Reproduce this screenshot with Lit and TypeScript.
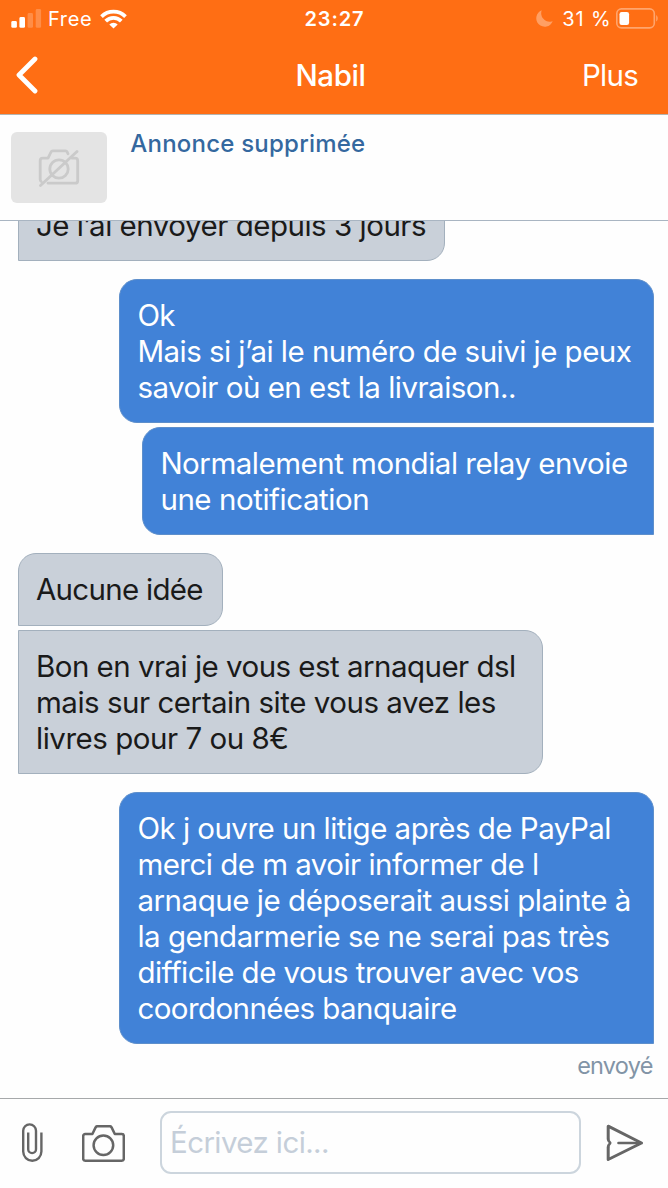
import { LitElement, html, css } from "lit";
import { customElement, property } from "lit/decorators.js";
import { classMap } from "lit/directives/class-map.js";

interface Line {
  text: string;
  tracking: number;
}

interface Message {
  mine: boolean;
  width: number;
  joinsPrevious?: boolean;
  lines: Line[];
}

const messages: Message[] = [
  { mine: false, width: 427, lines: [{ text: "Je l’ai envoyer depuis 3 jours", tracking: -0.486 }] },
  {
    mine: true,
    width: 534.5,
    lines: [
      { text: "Ok", tracking: -0.6 },
      { text: "Mais si j’ai le numéro de suivi je peux", tracking: -0.535 },
      { text: "savoir où en est la livraison..", tracking: -0.513 },
    ],
  },
  {
    mine: true,
    width: 511.5,
    joinsPrevious: true,
    lines: [
      { text: "Normalement mondial relay envoie", tracking: -0.494 },
      { text: "une notification", tracking: -0.45 },
    ],
  },
  { mine: false, width: 205, lines: [{ text: "Aucune idée", tracking: -0.72 }] },
  {
    mine: false,
    width: 525.5,
    joinsPrevious: true,
    lines: [
      { text: "Bon en vrai je vous est arnaquer dsl", tracking: -0.53 },
      { text: "mais sur certain site vous avez les", tracking: -0.48 },
      { text: "livres pour 7 ou 8€", tracking: -0.47 },
    ],
  },
  {
    mine: true,
    width: 534.5,
    lines: [
      { text: "Ok j ouvre un litige après de PayPal", tracking: -0.52 },
      { text: "merci de m avoir informer de l", tracking: -0.53 },
      { text: "arnaque je déposerait aussi plainte à", tracking: -0.465 },
      { text: "la gendarmerie se ne serai pas très", tracking: -0.505 },
      { text: "difficile de vous trouver avec vos", tracking: -0.545 },
      { text: "coordonnées banquaire", tracking: -0.565 },
    ],
  },
];

@customElement("status-bar")
class StatusBar extends LitElement {
  static styles = css`
    :host {
      display: grid;
      grid-template-columns: 1fr auto 1fr;
      align-items: center;
      height: 37px;
      padding: 0 10px 0 11px;
      font-size: 20px;
      line-height: 24px;
    }
    .side {
      display: flex;
      align-items: center;
    }
    .end {
      justify-content: flex-end;
    }
    .carrier {
      margin-left: 6px;
      letter-spacing: 0.64px;
    }
    .wifi {
      margin-left: 7.2px;
    }
    .time {
      font-weight: 600;
      letter-spacing: 0.9px;
    }
    .level {
      margin: 0 4.5px 0 9.5px;
      letter-spacing: 0.9px;
    }
    svg {
      display: block;
    }
  `;
  render() {
    return html`
      <div class="side">
        <svg width="31" height="19" viewBox="0 0 31 19" fill="#fff">
          <rect x=".3" y="12" width="5.6" height="6.8" rx="1.4" />
          <rect x="8.4" y="8" width="5.6" height="10.8" rx="1.4" />
          <rect x="16.6" y="4" width="5.4" height="14.8" rx="1.4" opacity=".22" />
          <rect x="24.7" y="0" width="5.4" height="18.8" rx="1.4" opacity=".22" />
        </svg>
        <span class="carrier">Free</span>
        <svg class="wifi" width="27" height="20" viewBox="0 0 27 20" fill="none" stroke="#fff" stroke-width="3.8">
          <path d="M1.5 7.6A17.2 17.2 0 0 1 25.5 7.6" />
          <path d="M5.7 12.2A11 11 0 0 1 21.3 12.2" />
          <path d="M13.5 19.5l-4.2-4.1a5.900 5.900 0 0 1 8.400 0z" fill="#fff" stroke="none" />
        </svg>
      </div>
      <span class="time">23:27</span>
      <div class="side end">
        <svg width="17" height="17" viewBox="0 0 17 17" fill="#ff9f63">
          <path d="M5.700.3A8.500 8.500 0 1 0 16.700 11.300 7.800 7.800 0 0 1 14.300 11.800 8.600 8.600 0 0 1 5.700.3z" />
        </svg>
        <span class="level">31 %</span>
        <svg width="42" height="21" viewBox="0 0 42 21">
          <rect x=".8" y=".9" width="37.500" height="19" rx="4.600" fill="none" stroke="#ffa56d" stroke-width="1.600" />
          <rect x="3.500" y="4" width="9.600" height="13" rx="2.200" fill="#fff" />
          <path d="M40.200 7v6.600c2-1.400 2-5.200 0-6.600z" fill="#ffa56d" />
        </svg>
      </div>
    `;
  }
}

@customElement("chat-bubble")
class ChatBubble extends LitElement {
  @property({ attribute: false }) message!: Message;
  static styles = css`
    :host {
      display: flex;
      flex: none;
    }
    .bubble {
      box-sizing: border-box;
      padding: 17px 0 17px 17.2px;
      border: 1px solid #a3b0bd;
      border-radius: 18px;
      background: #c9d0d9;
      color: #1a1a1a;
      font-size: 29.5px;
      line-height: 36.1px;
      white-space: nowrap;
    }
    .theirs {
      border-bottom-left-radius: 0;
    }
    .theirs.after {
      border-top-left-radius: 0;
    }
    .mine {
      margin-left: auto;
      border-color: #5e8fcb;
      border-bottom-right-radius: 0;
      background: #4182d7;
      color: #fff;
    }
    .mine.after {
      border-top-right-radius: 0;
    }
    .line {
      display: block;
    }
  `;
  render() {
    const m = this.message;
    const classes = { bubble: true, mine: m.mine, theirs: !m.mine, after: !!m.joinsPrevious };
    return html`<div class=${classMap(classes)} style="width:${m.width}px">
      ${m.lines.map((l) => html`<span class="line" style="letter-spacing:${l.tracking}px">${l.text}</span>`)}
    </div>`;
  }
}

@customElement("app-root")
class AppRoot extends LitElement {
  static styles = css`
    :host {
      display: flex;
      flex-direction: column;
      box-sizing: border-box;
      height: 1188px;
      overflow: hidden;
      background: #fefefe;
      font-family: Inter, "Liberation Sans", sans-serif;
    }
    svg {
      display: block;
    }
    .top {
      flex: none;
      height: 114px;
      background: #ff6e14;
      border-bottom: 1px solid #b4b4b0;
      color: #fff;
    }
    .nav {
      display: grid;
      grid-template-columns: 1fr auto 1fr;
      align-items: center;
      height: 75px;
      padding: 0 30px 0 16px;
      font-size: 29.5px;
      line-height: 36px;
    }
    .title {
      margin-left: 7px;
      font-weight: 500;
      letter-spacing: -0.4px;
    }
    .more {
      justify-self: end;
      letter-spacing: -0.75px;
    }
    .ad {
      display: flex;
      flex: none;
      gap: 23.3px;
      box-sizing: border-box;
      height: 106px;
      padding: 17px 11px;
      border-bottom: 1px solid #a9b5c2;
    }
    .thumb {
      display: grid;
      place-items: center;
      width: 96px;
      height: 71px;
      border-radius: 6px;
      background: #e4e4e4;
    }
    .ad-title {
      margin-top: -3px;
      color: #34689f;
      font-size: 24px;
      font-weight: 500;
      line-height: 29px;
      letter-spacing: 0.22px;
    }
    .thread {
      display: flex;
      flex: 1;
      flex-direction: column;
      justify-content: flex-end;
      min-height: 0;
      overflow: hidden;
      padding: 0 14.3px 17.6px 17.8px;
    }
    .spaced {
      margin-top: 18px;
    }
    .tight {
      margin-top: 4px;
    }
    .sent {
      flex: none;
      margin: 8px 1px 0 0;
      color: #8294a6;
      font-size: 23.5px;
      line-height: 28px;
      text-align: right;
      letter-spacing: -0.75px;
    }
    .composer {
      display: flex;
      flex: none;
      align-items: center;
      box-sizing: border-box;
      height: 90px;
      padding: 0 24px 2px 22px;
      border-top: 1px solid #a6a8aa;
    }
    .camera {
      margin: 2px 35px 0 39px;
    }
    .field {
      flex: 1;
      box-sizing: border-box;
      height: 63px;
      margin-right: 25.5px;
      padding-left: 8px;
      border: 2px solid #ccd5dd;
      border-radius: 11px;
      color: #c5ced9;
      font-size: 29.5px;
      line-height: 59px;
      letter-spacing: -0.6px;
    }
  `;
  render() {
    return html`
      <header class="top">
        <status-bar></status-bar>
        <div class="nav">
          <svg width="22" height="38" viewBox="0 0 22 38" fill="none" stroke="#fff" stroke-width="4.8" stroke-linecap="round" stroke-linejoin="round">
            <path d="M19 3L3 19 19 35" />
          </svg>
          <span class="title">Nabil</span>
          <span class="more">Plus</span>
        </div>
      </header>
      <section class="ad">
        <div class="thumb">
          <svg width="42" height="38" viewBox="0 0 42 38" fill="none" stroke="#cacaca" stroke-width="2.8" stroke-linecap="round" stroke-linejoin="round">
            <path d="M34 9.2h3.2a2.5 2.5 0 0 1 2.5 2.5v20a2.5 2.5 0 0 1-2.5 2.5H10M3.2 32.5a2.5 2.5 0 0 1-1-2V11.7a2.5 2.5 0 0 1 2.5-2.5H10l3-6.2a2 2 0 0 1 1.8-1.2h12.6a2 2 0 0 1 1.8 1.2l.8 1.8" />
            <circle cx="21" cy="20" r="9.2" />
            <path d="M2.5 36.5L39 2.5" />
          </svg>
        </div>
        <span class="ad-title">Annonce supprimée</span>
      </section>
      <main class="thread">
        ${messages.map(
          (m) => html`<chat-bubble class=${m.joinsPrevious ? "tight" : "spaced"} .message=${m}></chat-bubble>`
        )}
        <div class="sent">envoyé</div>
      </main>
      <footer class="composer">
        <svg width="21" height="39" viewBox="0 0 21 39" fill="none" stroke="#666" stroke-width="2.4">
          <path d="M19.4 9.500v19.100a9.100 9.100 0 0 1-18.200 0V7.800a6.400 6.400 0 0 1 12.800 0v18.400a3.900 3.900 0 0 1-7.800 0V9.500" />
        </svg>
        <svg class="camera" width="43" height="37" viewBox="0 0 43 37" fill="none" stroke="#666" stroke-width="2.5" stroke-linejoin="round">
          <path d="M3.2 9h7.2l3.2-6.6a2 2 0 0 1 1.8-1.2h12.4a2 2 0 0 1 1.8 1.2L32.8 9h7a2 2 0 0 1 2 2v22.7a2 2 0 0 1-2 2H3.2a2 2 0 0 1-2-2V11a2 2 0 0 1 2-2z" />
          <circle cx="21.4" cy="20.3" r="9.8" />
        </svg>
        <div class="field">Écrivez ici...</div>
        <svg width="38" height="37" viewBox="0 0 38 37" fill="none" stroke="#666" stroke-width="3" stroke-linecap="round" stroke-linejoin="round">
          <path d="M2.2 15V2.2L35.5 19 2.2 35.5V23" />
          <path d="M2.2 15.5c.2 2 1.6 2 2 3.4-.4 1.6-1.8 1.6-2 3.6" stroke-width="2.6" />
          <path d="M12.500 19H34" stroke-width="2.6" />
        </svg>
      </footer>
    `;
  }
}
